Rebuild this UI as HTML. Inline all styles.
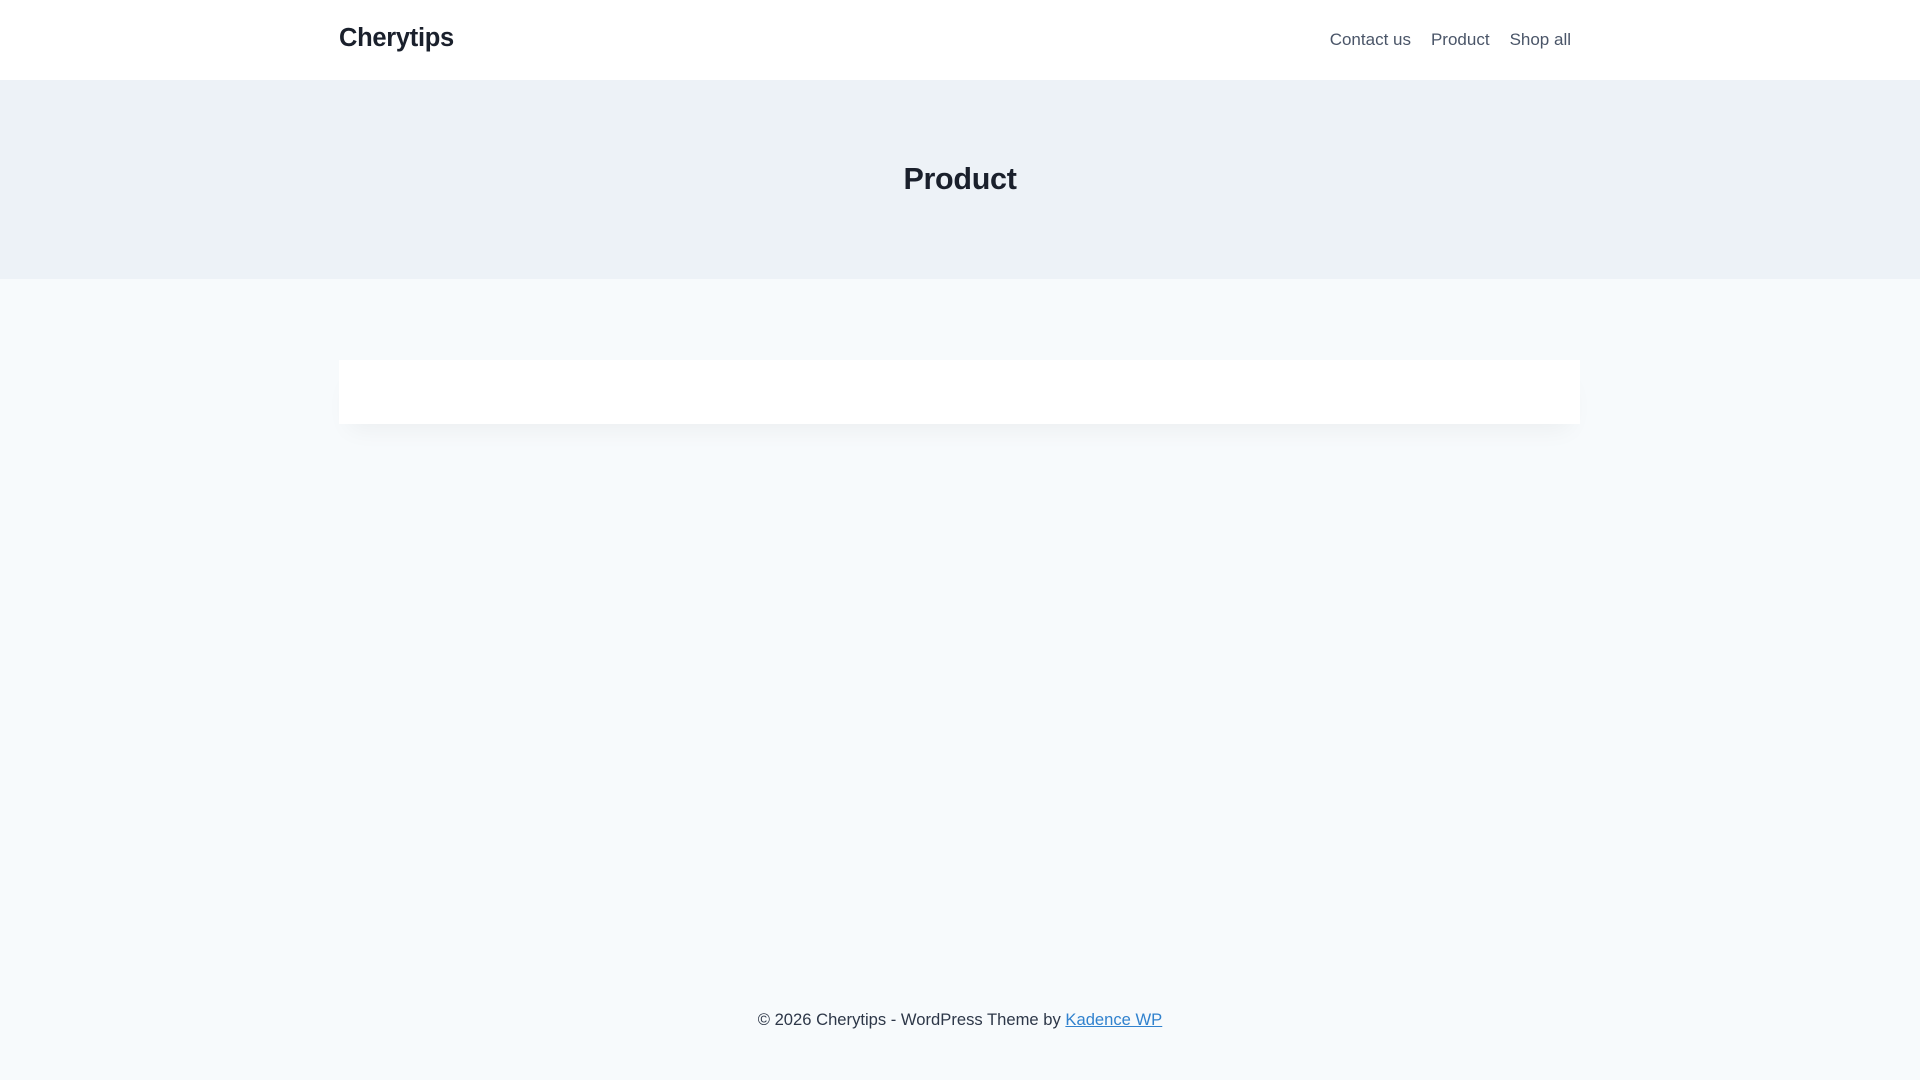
<!DOCTYPE html>
<html><head><meta charset="utf-8"><style>
html,body{margin:0;padding:0}
body{width:1920px;height:1080px;background:#f7fafc;font-family:"Liberation Sans",Arial,sans-serif;position:relative;overflow:hidden}
.hdr{position:absolute;left:0;top:0;width:1920px;height:80px;background:#fff}
.logo{position:absolute;left:339px;top:24px;font-size:25.5px;font-weight:bold;color:#1a202c;letter-spacing:-0.3px}
.nav{position:absolute;right:349px;top:30px;font-size:17px;color:#4a5568}
.nav span{margin-left:20px}
.hero{position:absolute;left:0;top:80px;width:1920px;height:199px;background:#edf2f7}
.hero h1{margin:0;position:absolute;width:100%;text-align:center;top:82px;font-size:30.5px;font-weight:bold;color:#1a202c;letter-spacing:-0.3px}
.card{position:absolute;left:339px;top:360px;width:1241px;height:64px;background:#fff;box-shadow:0 15px 25px -10px rgba(0,0,0,0.05)}
.foot{position:absolute;left:0;width:100%;top:1010px;text-align:center;font-size:16.6px;color:#2d3748}
.foot a{color:#3182ce;text-decoration:underline}
</style></head><body>
<div class="hdr"><div class="logo">Cherytips</div>
<div class="nav"><span>Contact us</span><span>Product</span><span>Shop all</span></div></div>
<div class="hero"><h1>Product</h1></div>
<div class="card"></div>
<div class="foot">© 2026 Cherytips - WordPress Theme by <a>Kadence WP</a></div>
</body></html>
